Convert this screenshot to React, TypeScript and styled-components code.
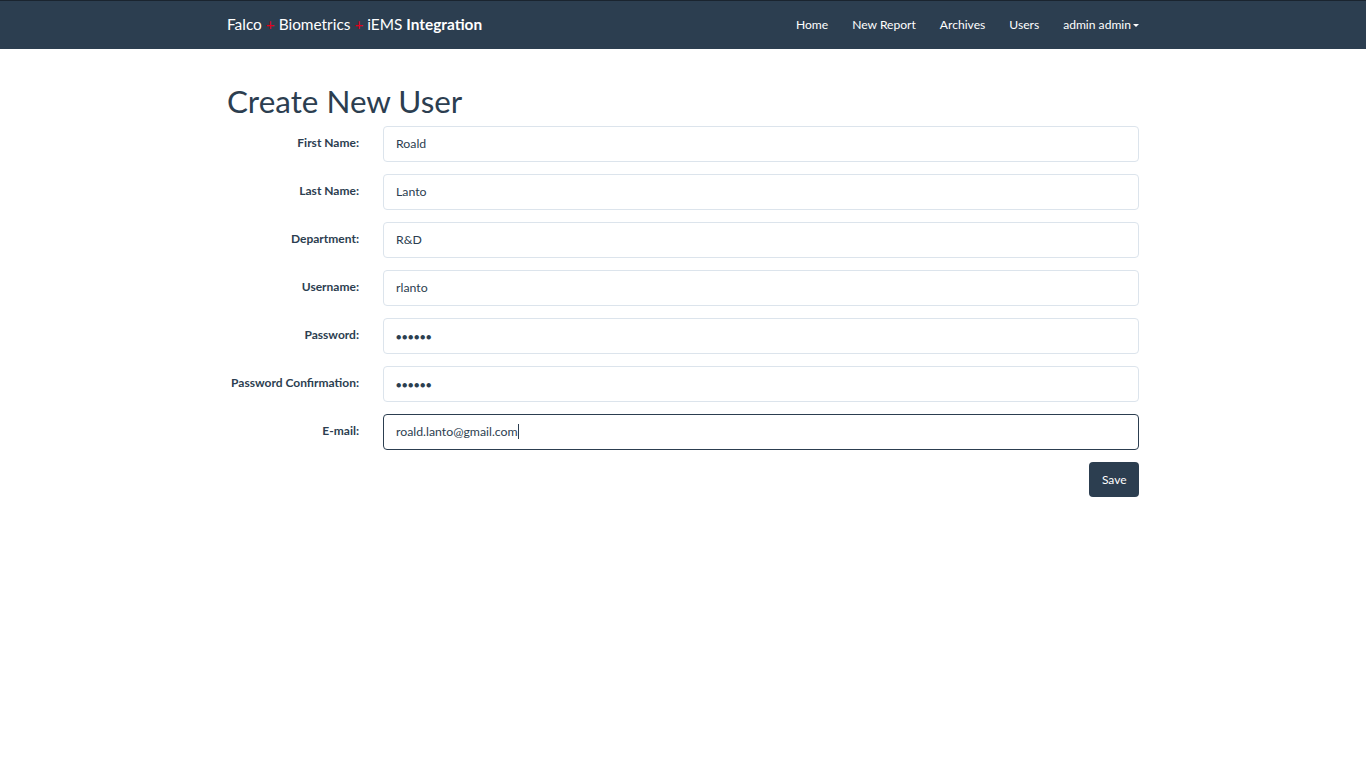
import React from "react";
import styled, { createGlobalStyle } from "styled-components";

const Global = createGlobalStyle`
  html, body { margin: 0; padding: 0; background: #fff; }
  body { font-family: Lato, "Noto Sans", sans-serif; color: #2c3e50; }
  * { box-sizing: border-box; }
`;

const Navbar = styled.nav`
  background: #2c3e50;
  height: 49px;
  border-top: 1px solid #1a242f;
`;

const NavInner = styled.div`
  width: 912px;
  margin: 0 auto;
  height: 47px;
  display: flex;
  align-items: center;
  justify-content: space-between;
`;

const Brand = styled.div`
  font-size: 15.4px;
  color: #fff;
  white-space: pre;
  margin-top: -1px;
`;

const Plus = styled.span`
  color: #e3001b;
`;

const Bold = styled.b`
  font-weight: 700;
`;

const NavLinks = styled.ul`
  list-style: none;
  margin: 0;
  padding: 0;
  display: flex;
  gap: 24px;
`;

const NavLink = styled.li`
  font-size: 12.1px;
  color: #fff;
  display: flex;
  align-items: center;
`;

const Caret = styled.span`
  display: inline-block;
  width: 0;
  height: 0;
  margin-left: 2px;
  margin-top: 1px;
  border-top: 3px solid #fff;
  border-left: 3px solid transparent;
  border-right: 3px solid transparent;
`;

const Container = styled.main`
  width: 912px;
  margin: 0 auto;
`;

const Title = styled.h1`
  font-size: 31.4px;
  font-weight: 400;
  margin: 34px 0 7px;
  line-height: 36px;
  color: #2c3e50;
`;

const Form = styled.form`
  display: grid;
  grid-template-columns: 132px 1fr;
  column-gap: 24px;
  row-gap: 12px;
  align-items: center;
`;

const Label = styled.label`
  text-align: right;
  font-size: 12px;
  font-weight: 700;
  color: #2c3e50;
  margin-top: -4px;
`;

const Input = styled.div<{ $focused?: boolean }>`
  height: 36px;
  border: 1px solid ${(p) => (p.$focused ? "#2c3e50" : "#dce4ec")};
  border-radius: 4px;
  padding: 0 12px 1px;
  display: flex;
  align-items: center;
  font-size: 12.3px;
  color: #2c3e50;
`;

const Dots = styled.span`
  font-size: 9px;
  letter-spacing: 0.6px;
  margin-top: 1px;
`;

const Cursor = styled.span`
  display: inline-block;
  width: 1px;
  height: 15px;
  background: #2c3e50;
`;

const Actions = styled.div`
  grid-column: 1 / 3;
  display: flex;
  justify-content: flex-end;
`;

const Button = styled.button`
  background: #2c3e50;
  color: #fff;
  border: none;
  border-radius: 4px;
  height: 35px;
  padding: 0 12.5px;
  font-family: Lato, sans-serif;
  font-size: 12px;
`;

const fields: { label: string; value: string; password?: boolean; focused?: boolean }[] = [
  { label: "First Name:", value: "Roald" },
  { label: "Last Name:", value: "Lanto" },
  { label: "Department:", value: "R&D" },
  { label: "Username:", value: "rlanto" },
  { label: "Password:", value: "", password: true },
  { label: "Password Confirmation:", value: "", password: true },
  { label: "E-mail:", value: "roald.lanto@gmail.com", focused: true },
];

export default function App() {
  return (
    <>
      <Global />
      <Navbar>
        <NavInner>
          <Brand>
            Falco <Plus>+</Plus> Biometrics <Plus>+</Plus> iEMS <Bold>Integration</Bold>
          </Brand>
          <NavLinks>
            <NavLink>Home</NavLink>
            <NavLink>New Report</NavLink>
            <NavLink>Archives</NavLink>
            <NavLink>Users</NavLink>
            <NavLink>
              admin admin
              <Caret />
            </NavLink>
          </NavLinks>
        </NavInner>
      </Navbar>
      <Container>
        <Title>Create New User</Title>
        <Form>
          {fields.map((f) => (
            <React.Fragment key={f.label}>
              <Label>{f.label}</Label>
              <Input $focused={f.focused}>
                {f.password ? <Dots>●●●●●●</Dots> : f.value}
                {f.focused && <Cursor />}
              </Input>
            </React.Fragment>
          ))}
          <Actions>
            <Button type="button">Save</Button>
          </Actions>
        </Form>
      </Container>
    </>
  );
}
